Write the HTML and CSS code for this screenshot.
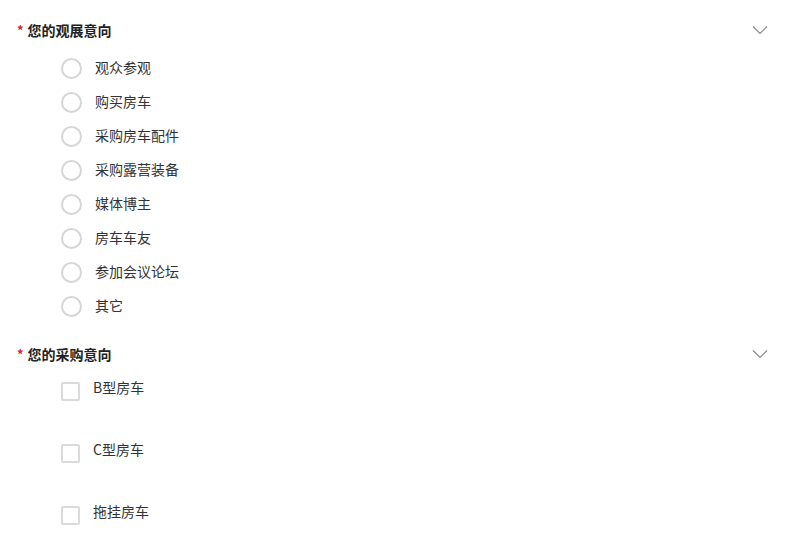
FILE: index.html
```html
<!DOCTYPE html>
<html lang="zh-CN">
<head>
<meta charset="utf-8">
<link rel="stylesheet" href="styles.css">
</head>
<body>
<div class="form">
  <div class="section">
    <div class="head">
      <span class="req">*</span><span class="title">您的观展意向</span>
      <svg class="chev" width="16" height="10" viewBox="0 0 16 10"><path d="M1 1.5 L8 8.5 L15 1.5" fill="none" stroke="#888" stroke-width="1.2"/></svg>
    </div>
    <ul class="radios">
      <li><span class="radio"></span><span class="lbl">观众参观</span></li>
      <li><span class="radio"></span><span class="lbl">购买房车</span></li>
      <li><span class="radio"></span><span class="lbl">采购房车配件</span></li>
      <li><span class="radio"></span><span class="lbl">采购露营装备</span></li>
      <li><span class="radio"></span><span class="lbl">媒体博主</span></li>
      <li><span class="radio"></span><span class="lbl">房车车友</span></li>
      <li><span class="radio"></span><span class="lbl">参加会议论坛</span></li>
      <li><span class="radio"></span><span class="lbl">其它</span></li>
    </ul>
  </div>
  <div class="section second">
    <div class="head">
      <span class="req">*</span><span class="title">您的采购意向</span>
      <svg class="chev" width="16" height="10" viewBox="0 0 16 10"><path d="M1 1.5 L8 8.5 L15 1.5" fill="none" stroke="#888" stroke-width="1.2"/></svg>
    </div>
    <ul class="checks">
      <li><span class="box"></span><span class="lbl">B型房车</span></li>
      <li><span class="box"></span><span class="lbl">C型房车</span></li>
      <li><span class="box"></span><span class="lbl">拖挂房车</span></li>
    </ul>
  </div>
</div>
</body>
</html>
```

FILE: styles.css
```css
html, body {
  margin: 0;
  padding: 0;
  background: #fff;
}
body {
  font-family: "Noto Sans CJK SC", "Noto Sans", sans-serif;
  font-size: 14px;
  color: #333;
}
.form {
  padding-top: 20px;
}
.head {
  display: flex;
  align-items: center;
  height: 20px;
  padding-left: 17px;
  padding-right: 22px;
}
.req {
  color: #e02424;
  font-weight: bold;
  font-size: 13px;
  margin-right: 4px;
  position: relative;
  top: -1px;
}
.title {
  font-weight: bold;
  color: #222;
  flex: 1;
}
.chev {
  display: block;
}
ul {
  list-style: none;
  margin: 0;
  padding: 0 0 0 61px;
}
.radios {
  margin-top: 11px;
}
.radios li {
  display: flex;
  align-items: center;
  height: 34px;
}
.radio {
  box-sizing: border-box;
  width: 21px;
  height: 21px;
  border: 2px solid #d6d6d6;
  border-radius: 50%;
  margin-right: 13px;
}
.radios .lbl {
  position: relative;
  top: -1px;
}
.second {
  margin-top: 21px;
}
.checks {
  margin-top: 17px;
}
.checks li {
  display: flex;
  align-items: flex-start;
  height: 62px;
}
.box {
  box-sizing: border-box;
  width: 19px;
  height: 19px;
  border: 2px solid #dadada;
  border-radius: 2px;
  margin-top: 1px;
  margin-right: 13px;
}
.checks .lbl {
  line-height: 12px;
}
.lbl {
  color: #333;
}
```
